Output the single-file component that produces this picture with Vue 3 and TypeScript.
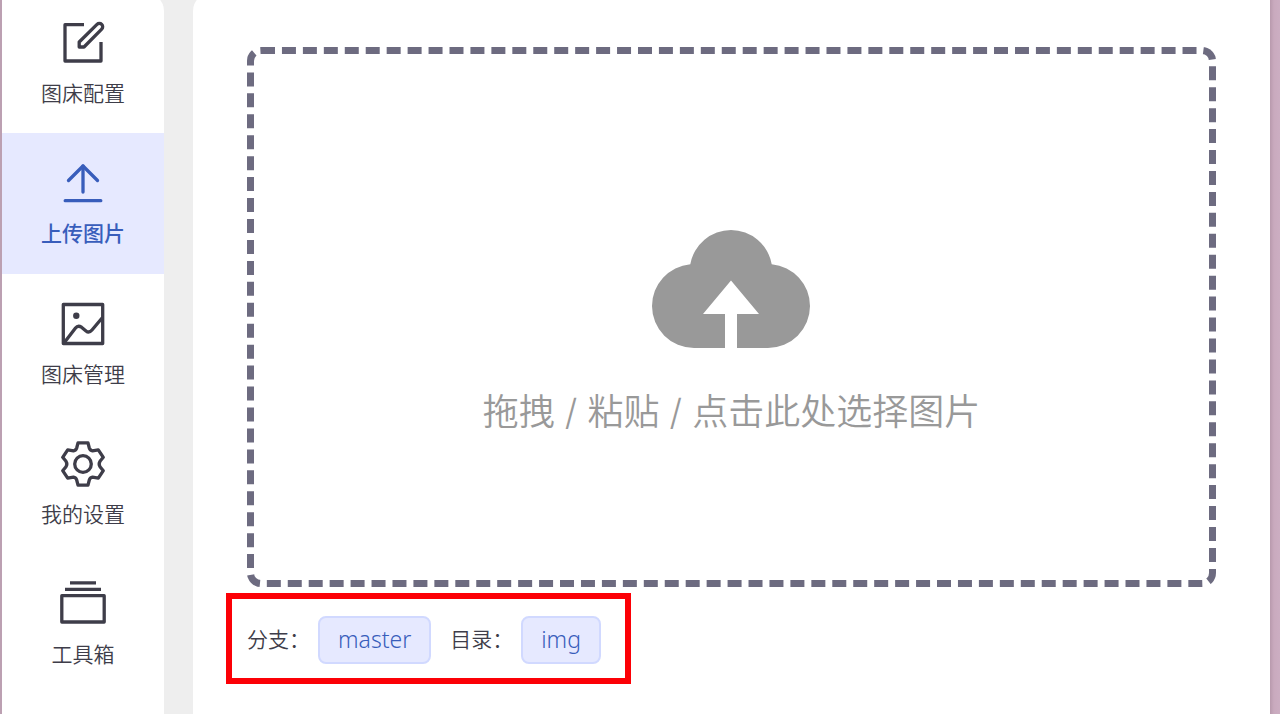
<script setup lang="ts">
import { ref } from 'vue'

type IconName = 'edit' | 'upload' | 'picture' | 'gear' | 'box'

interface NavItem {
  icon: IconName
  label: string
}

const items: NavItem[] = [
  { icon: 'edit', label: '图床配置' },
  { icon: 'upload', label: '上传图片' },
  { icon: 'picture', label: '图床管理' },
  { icon: 'gear', label: '我的设置' },
  { icon: 'box', label: '工具箱' },
]

const active = ref<IconName>('upload')

const targets = [
  { label: '分支：', value: 'master' },
  { label: '目录：', value: 'img' },
]
</script>

<template>
  <div class="desktop">
    <div class="window">
      <nav class="sidebar">
        <button
          v-for="item in items"
          :key="item.icon"
          type="button"
          class="nav-item"
          :class="{ active: item.icon === active }"
          @click="active = item.icon"
        >
          <svg class="nav-icon" viewBox="0 0 48 48" aria-hidden="true">
            <template v-if="item.icon === 'edit'">
              <path d="M25 5.7H6V42H42V23" />
              <path d="M20.2 28V23L38 5.4a3.3 3.3 0 0 1 4.7 4.7L25 28Z" />
            </template>
            <template v-else-if="item.icon === 'upload'">
              <path class="round" d="M6.2 41.7H41.8M24 7V33" />
              <path class="round" d="M9.5 21.5L24 7L38.5 21.5" />
            </template>
            <template v-else-if="item.icon === 'picture'">
              <rect x="4.3" y="4.5" width="39.4" height="39" />
              <circle class="dot" cx="17.3" cy="15.7" r="3.2" />
              <path d="M5 43L16.5 28Q19 24.8 22.5 27.2L27 31Q30 33.5 33 30L43.5 17.5" />
            </template>
            <template v-else-if="item.icon === 'gear'">
              <path
                d="M19 2.8H29L30.3 8Q31 10.5 33.5 10.8L39.3 9.8L44.3 17.3L41 21.3Q39.3 24 41 26.7L44.3 30.7L39.3 38.2L33.5 37.2Q31 37.5 30.3 40L29 45.2H19L17.7 40Q17 37.5 14.5 37.2L8.7 38.2L3.7 30.7L7 26.7Q8.7 24 7 21.3L3.7 17.3L8.7 9.8L14.5 10.8Q17 10.5 17.7 8Z"
              />
              <circle cx="24" cy="24" r="8.3" />
            </template>
            <template v-else>
              <path d="M11 2.8H37M6 9.3H42" />
              <rect x="2.8" y="15.7" width="42.4" height="26.3" />
            </template>
          </svg>
          <span>{{ item.label }}</span>
        </button>
      </nav>

      <main class="panel">
        <label class="dropzone" for="picker">
          <input id="picker" class="picker" type="file" accept="image/*" multiple />
          <svg class="cloud" viewBox="0 0 159 118" aria-hidden="true">
            <path
              d="M42 118A42 42 0 0 1 0 76A42 42 0 0 1 38.3 34.2A41.4 41.4 0 0 1 79 0A41.4 41.4 0 0 1 119.7 34.2A42 42 0 0 1 158 76A42 42 0 0 1 116 118H85V84H107L79 50.5L51 84H73V118Z"
            />
          </svg>
          <span class="hint">拖拽 / 粘贴 / 点击此处选择图片</span>
        </label>

        <div class="targets">
          <div v-for="target in targets" :key="target.value" class="target">
            <span class="target-label">{{ target.label }}</span>
            <span class="tag">{{ target.value }}</span>
          </div>
        </div>
      </main>
    </div>
  </div>
</template>

<style>
body {
  margin: 0;
}
</style>

<style scoped>
.desktop {
  box-sizing: border-box;
  height: 100vh;
  overflow: hidden;
  padding: 0 10px 0 2px;
  background: linear-gradient(to left, #ccaec2 0, #c9aabe 6px, #b89aad 10px, #bca0b2 11px);
  font-family: 'Noto Sans CJK SC', sans-serif;
  font-size: 21px;
  font-weight: 350;
  color: #3e3d49;
}

.window {
  display: flex;
  gap: 29px;
  height: 100%;
  background: #eee;
}

.sidebar {
  box-sizing: border-box;
  display: flex;
  flex: 0 0 162px;
  flex-direction: column;
  margin-top: -7px;
  padding-bottom: 19px;
  border-radius: 18px 18px 0 0;
  border-top-left-radius: 0;
  background: #fff;
}

.nav-item {
  display: flex;
  flex: 1;
  flex-direction: column;
  align-items: center;
  justify-content: center;
  gap: 9px;
  padding: 0;
  border: 0;
  background: none;
  color: inherit;
  font: inherit;
  line-height: 32px;
  cursor: pointer;
}

.nav-item.active {
  background: #e6e9ff;
  color: #385dbb;
  font-weight: 500;
}

.nav-icon {
  width: 48px;
  height: 48px;
  fill: none;
  stroke: currentColor;
  stroke-width: 3.3;
  stroke-linejoin: round;
}

.round {
  stroke-linecap: round;
}

.dot {
  fill: currentColor;
  stroke: none;
}

.panel {
  box-sizing: border-box;
  display: flex;
  flex: 1;
  flex-direction: column;
  margin-top: -7px;
  padding: 54px 54px 30px;
  border-top-left-radius: 18px;
  background: #fff;
}

.dropzone {
  box-sizing: border-box;
  display: flex;
  flex: 1;
  flex-direction: column;
  align-items: center;
  gap: 37px;
  margin-bottom: 6px;
  padding-top: 176px;
  border: 7px dashed #6d6b80;
  border-radius: 14px;
  color: #999;
  cursor: pointer;
}

.picker {
  position: absolute;
  width: 1px;
  height: 1px;
  opacity: 0;
}

.cloud {
  width: 159px;
  height: 118px;
  fill: currentColor;
}

.hint {
  font-family: Inter, 'Noto Sans CJK SC', sans-serif;
  font-size: 36px;
  line-height: 54px;
}

.targets {
  display: flex;
  align-self: flex-start;
  gap: 19px;
  margin-left: -21px;
  padding: 17px 24px 14px 15px;
  border: 6px solid #fc0006;
}

.target {
  display: flex;
  align-items: center;
  gap: 8px;
}

.target-label {
  padding-bottom: 4px;
}

.tag {
  padding: 0 18px 2px;
  border: 2px solid #d1d9ff;
  border-radius: 8px;
  background: #e6e9ff;
  color: #385dbb;
  font-family: 'Noto Sans', sans-serif;
  font-size: 23px;
  font-weight: 350;
  line-height: 42px;
}
</style>
